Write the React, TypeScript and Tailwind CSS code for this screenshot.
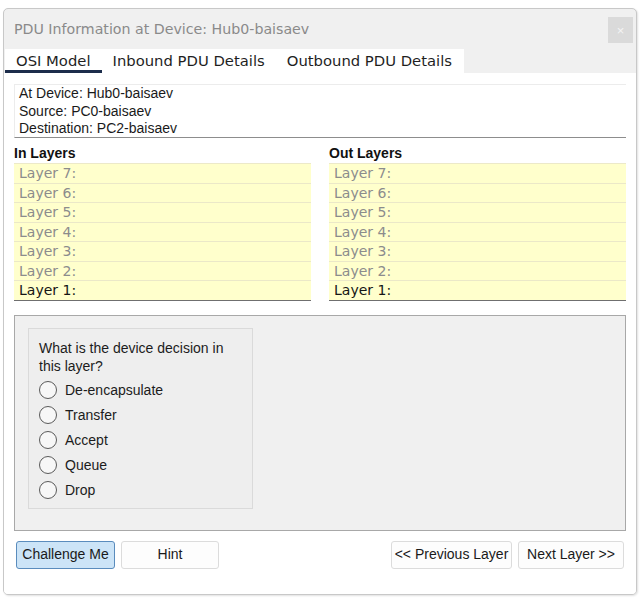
import { useState } from "react";

const layers = ["Layer 7:", "Layer 6:", "Layer 5:", "Layer 4:", "Layer 3:", "Layer 2:", "Layer 1:"];
const choices = ["De-encapsulate", "Transfer", "Accept", "Queue", "Drop"];
const tabs = ["OSI Model", "Inbound PDU Details", "Outbound PDU Details"];

function LayerColumn({ title }: { title: string }) {
  return (
    <div>
      <p className="h-[18px] font-['Liberation_Sans',Arial,sans-serif] text-[14px] font-bold leading-[18px] text-[#111]">
        {title}
      </p>
      <div className="mt-[1px] border-t border-[#ece9c9]">
        {layers.map((layer, index) => {
          const last = index === layers.length - 1;
          return (
            <div
              key={layer}
              className={`h-[19.5px] bg-[#ffffcc] pl-[5px] font-['DejaVu_Sans',sans-serif] text-[14px] leading-[18.5px] ${
                last ? "border-b border-[#6f6f6f] text-[#161616]" : "border-b border-[#ebe8c8] text-[#8c8c8c]"
              }`}
            >
              {layer}
            </div>
          );
        })}
      </div>
    </div>
  );
}

export default function App() {
  const [tab, setTab] = useState(0);
  const [choice, setChoice] = useState<string | null>(null);

  return (
    <div className="h-[600px] w-[642px] bg-white pl-[3px] pt-[8px] font-['Liberation_Sans',Arial,sans-serif]">
      <div className="flex h-[587px] w-[634px] flex-col overflow-hidden rounded-[5px] border border-[#c8c8c8] bg-[#f0f0f0] shadow-[1px_1px_2px_rgba(0,0,0,0.12)]">
        <div className="flex h-[40px] shrink-0 items-center justify-between pl-[10px] pr-[3px]">
          <span className="pt-[2px] font-['DejaVu_Sans',sans-serif] text-[14.2px] text-[#8a8a8a]">
            PDU Information at Device: Hub0-baisaev
          </span>
          <button
            type="button"
            className="mt-[2px] flex h-[26px] w-[25px] items-center justify-center bg-[#dadada] text-[13px] leading-none text-[#f4f4f4]"
          >
            ×
          </button>
        </div>

        <div className="flex h-[24px] shrink-0">
          <div className="ml-[1px] flex w-[459px] bg-white">
            {tabs.map((name, index) => (
              <button
                key={name}
                type="button"
                onClick={() => setTab(index)}
                className={`h-[24px] shrink-0 whitespace-nowrap px-[11px] pt-[2px] font-['DejaVu_Sans',sans-serif] text-[14.8px] leading-[20px] text-[#1f1f1f] ${
                  tab === index ? "border-b-[3px] border-[#1c2d4b]" : "border-b-[3px] border-transparent"
                }`}
              >
                {name}
              </button>
            ))}
          </div>
        </div>

        <div className="flex-1 bg-white px-[10px] pt-[11px]">
          <div className="h-[54px] border-l border-t border-[#ececec] border-b border-b-[#8d8d8d] pl-[4px] text-[14px] leading-[17.5px] text-[#1a1a1a]">
            <p>At Device: Hub0-baisaev</p>
            <p>Source: PC0-baisaev</p>
            <p>Destination: PC2-baisaev</p>
          </div>

          <div className="mt-[6px] grid grid-cols-2 gap-x-[18px]">
            <LayerColumn title="In Layers" />
            <LayerColumn title="Out Layers" />
          </div>

          <div className="mt-[14px] h-[216px] border border-[#a8a8a8] bg-[#f0f0f0] pl-[13px] pt-[12px]">
            <div className="h-[181px] w-[225px] border border-[#dadada] bg-[#eeeeee] pl-[10px] pt-[10px]">
              <p className="text-[14px] leading-[18px] text-[#1c1c1c]">
                What is the device decision in
                <br />
                this layer?
              </p>
              <div className="mt-[3px] flex flex-col">
                {choices.map((item) => (
                  <label key={item} className="flex h-[25px] cursor-pointer items-center gap-[8px]">
                    <span className="flex h-[18px] w-[18px] items-center justify-center rounded-full border border-[#5a5a5a] bg-[#f7f7f7]">
                      {choice === item && <span className="h-[8px] w-[8px] rounded-full bg-[#333]" />}
                    </span>
                    <input
                      type="radio"
                      name="decision"
                      className="hidden"
                      checked={choice === item}
                      onChange={() => setChoice(item)}
                    />
                    <span className="text-[14px] text-[#1c1c1c]">{item}</span>
                  </label>
                ))}
              </div>
            </div>
          </div>

          <div className="mt-[10px] flex items-center justify-between px-[2px]">
            <div className="flex gap-[6px]">
              <button
                type="button"
                className="h-[28px] w-[99px] rounded-[3px] border border-[#5a8cbd] bg-[#cce4f7] text-[14px] text-[#1a1a1a]"
              >
                Challenge Me
              </button>
              <button
                type="button"
                className="h-[28px] w-[98px] rounded-[3px] border border-[#dcdcdc] bg-[#fdfdfd] text-[14px] text-[#1a1a1a]"
              >
                Hint
              </button>
            </div>
            <div className="flex gap-[6px]">
              <button
                type="button"
                className="h-[28px] w-[121px] rounded-[3px] border border-[#dcdcdc] bg-[#fdfdfd] text-[14px] text-[#1a1a1a]"
              >
                &lt;&lt; Previous Layer
              </button>
              <button
                type="button"
                className="h-[28px] w-[106px] rounded-[3px] border border-[#dcdcdc] bg-[#fdfdfd] text-[14px] text-[#1a1a1a]"
              >
                Next Layer &gt;&gt;
              </button>
            </div>
          </div>
        </div>
      </div>
    </div>
  );
}
